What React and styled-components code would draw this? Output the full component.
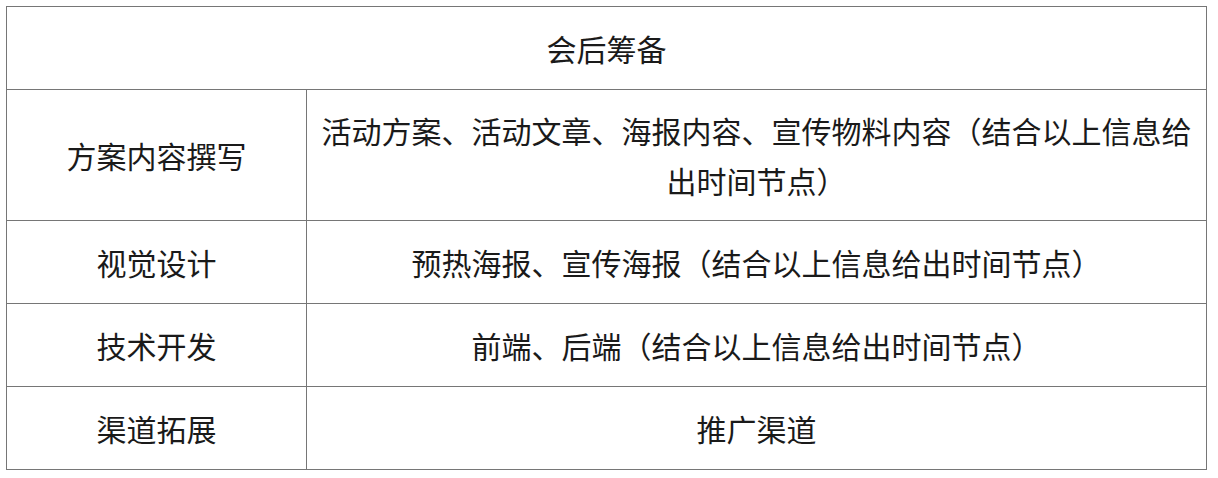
import React from "react";
import styled, { createGlobalStyle } from "styled-components";

const Global = createGlobalStyle`
  html, body { margin: 0; padding: 0; background: #ffffff; }
  body { font-family: "Noto Sans CJK SC", "Noto Sans", sans-serif; }
`;

const Page = styled.div`
  padding: 6px 11px 0 6px;
`;

const Table = styled.table`
  width: 1201px;
  border-collapse: collapse;
  table-layout: fixed;
  color: #1a1a1a;
  font-size: 30px;
  line-height: 50px;
  text-spacing-trim: space-all;
`;

const Cell = styled.td`
  border: 1px solid #767676;
  text-align: center;
  vertical-align: middle;
  padding: ${(p) => (p.$tall ? "15px" : "16px")} 10px;
  height: ${(p) => (p.$tall ? "100px" : "49px")};
  font-weight: 400;
`;

const Head = styled(Cell).attrs({ as: "th" })``;

const rows = [
  {
    name: "方案内容撰写",
    desc: "活动方案、活动文章、海报内容、宣传物料内容（结合以上信息给出时间节点）",
    tall: true,
  },
  { name: "视觉设计", desc: "预热海报、宣传海报（结合以上信息给出时间节点）" },
  { name: "技术开发", desc: "前端、后端（结合以上信息给出时间节点）" },
  { name: "渠道拓展", desc: "推广渠道" },
];

export default function App() {
  return (
    <Page>
      <Global />
      <Table>
        <colgroup>
          <col style={{ width: 300 }} />
          <col />
        </colgroup>
        <thead>
          <tr>
            <Head colSpan={2}>会后筹备</Head>
          </tr>
        </thead>
        <tbody>
          {rows.map((r) => (
            <tr key={r.name}>
              <Cell $tall={r.tall}>{r.name}</Cell>
              <Cell $tall={r.tall}>{r.desc}</Cell>
            </tr>
          ))}
        </tbody>
      </Table>
    </Page>
  );
}
